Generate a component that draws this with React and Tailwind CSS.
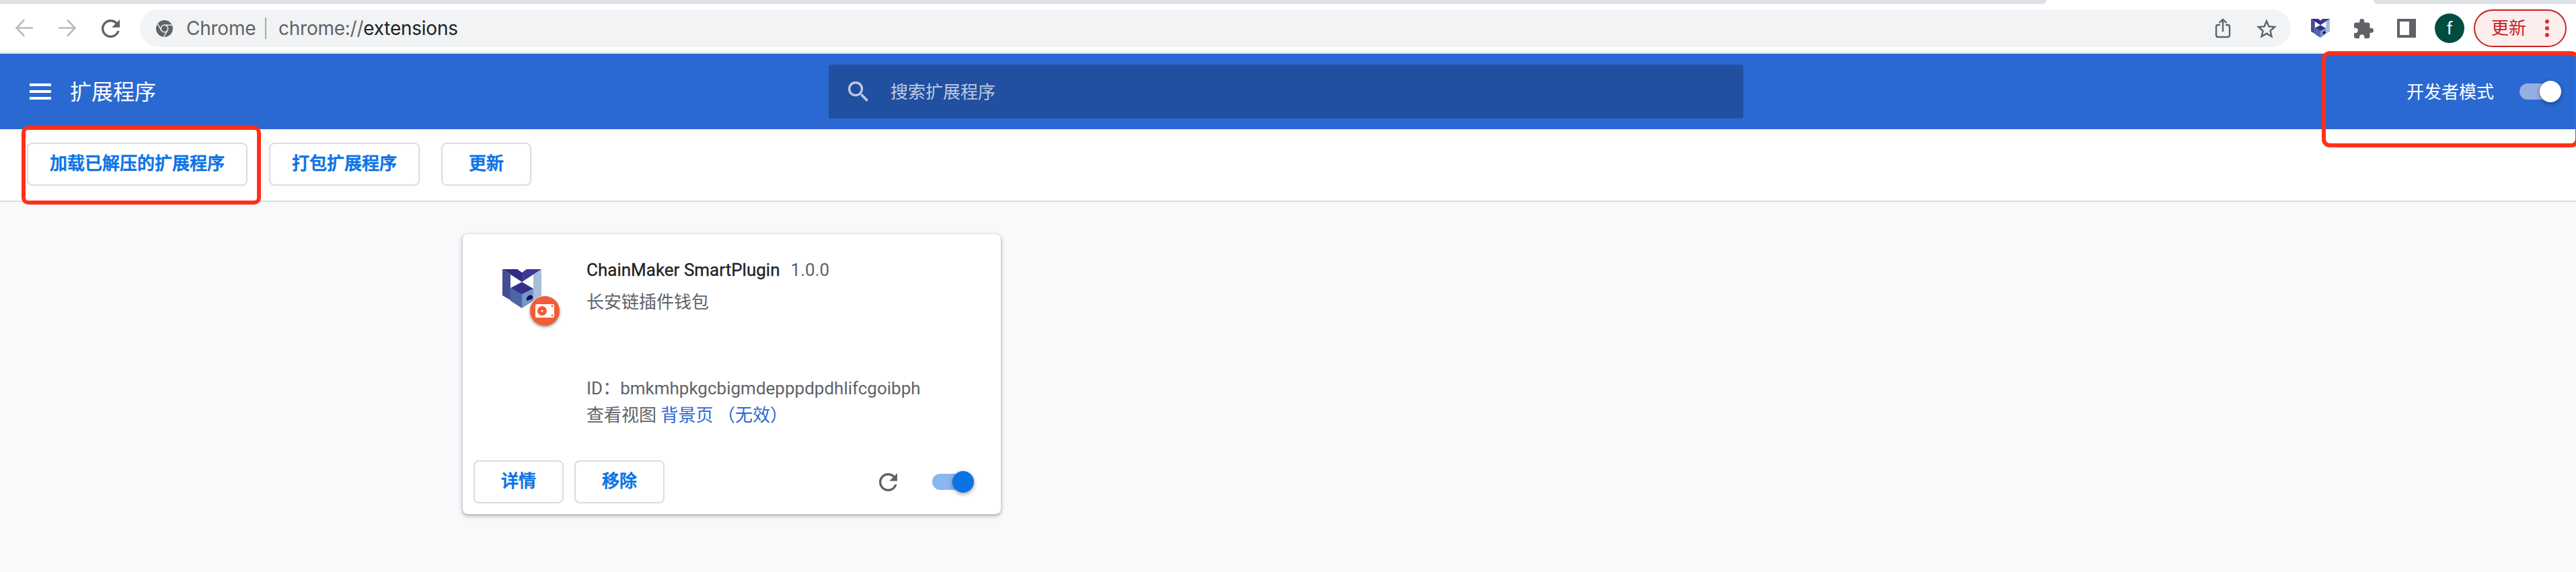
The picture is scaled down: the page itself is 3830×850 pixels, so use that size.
const CJK = "font-['Roboto','Noto_Sans_CJK_SC',sans-serif]";

function MakerLogo({ className }) {
  return (
    <svg className={className} viewBox="0 0 58 58">
      <path d="M0 0L12 8V46L0 39Z" fill="#444c94" />
      <path d="M58 0L46 8V46L58 39Z" fill="#a5bfda" />
      <path d="M0 0H22L29 5V19Z" fill="#2e2c84" />
      <path d="M58 0H36L29 5V19Z" fill="#3c3a93" />
      <path d="M29 19L46 29L29 38L12 28Z" fill="#333089" />
      <path d="M12 28L29 37V58L12 47Z" fill="#4d66a6" />
      <path d="M46 29L29 37V58L46 47Z" fill="#7697c4" />
      <path d="M36 42L41 38L45 40V44L36 47Z" fill="#12105c" />
    </svg>
  );
}

function Reload({ className }) {
  return (
    <svg className={className} viewBox="4 4 16 16" fill="currentColor">
      <path d="M17.65 6.35A7.958 7.958 0 0 0 12 4c-4.42 0-7.99 3.58-7.99 8s3.57 8 7.99 8c3.73 0 6.84-2.55 7.73-6h-2.08A5.99 5.99 0 0 1 12 18c-3.31 0-6-2.69-6-6s2.69-6 6-6c1.66 0 3.14.69 4.22 1.78L13 11h7V4l-2.35 2.35z" />
    </svg>
  );
}

function Button({ children, className = "" }) {
  return (
    <button className={`flex h-16 items-center justify-center rounded-lg border-2 border-[#dadce0] bg-white pb-0.5 text-[26px] leading-none font-medium text-[#0b73e6] [-webkit-text-stroke:0.7px_#0b73e6] ${className}`}>
      {children}
    </button>
  );
}

function Toggle({ track, knob }) {
  return (
    <div className={`flex h-6 w-[60px] items-center justify-end rounded-full ${track}`}>
      <div className={`-mr-0.5 size-8 shrink-0 rounded-full shadow-[0_2px_6px_rgba(0,0,0,0.4)] ${knob}`} />
    </div>
  );
}

function BrowserBar() {
  return (
    <div className="h-20 border-b-2 border-[#dadce0] bg-white">
      <div className="flex h-1.5 justify-between">
        <div className="w-[3043px] rounded-br-[12px] bg-[#dee1e6]" />
        <div className="w-[301px] rounded-bl-[12px] bg-[#dee1e6]" />
      </div>
      <div className="flex h-[72px] items-center pl-[22px] font-['Inter','Noto_Sans_CJK_SC',sans-serif]">
        <svg className="h-7 w-7" viewBox="0 0 28 28" fill="none" stroke="#bababa" strokeWidth="2.6">
          <path d="M27 13.500H3M14 1.500L2.500 13.500L14 25.500" />
        </svg>
        <svg className="ml-9 h-7 w-7" viewBox="0 0 28 28" fill="none" stroke="#bababa" strokeWidth="2.6">
          <path d="M1 13.500H25M14 1.500L25.500 13.500L14 25.500" />
        </svg>
        <Reload className="ml-[37px] size-[27px] text-[#5f6368]" />
        <div className="ml-[30px] flex h-14 w-[3198px] items-center rounded-full bg-[#f1f3f4] pl-6 text-[28px] leading-none tracking-[-0.25px] text-[#5f6368]">
          <svg className="size-[25px]" viewBox="0 0 24 24">
            <circle cx="12" cy="12" r="12" fill="#5f6368" />
            <g fill="none" stroke="#f1f3f4" strokeWidth="1.4">
              <circle cx="12" cy="12" r="5" />
              <path d="M12 7H23M7.700 14.500L2.200 5.500M16.300 14.500L11 24" />
            </g>
          </svg>
          <span className="ml-5 w-[103px]">Chrome</span>
          <div className="ml-[14px] h-8 w-0.5 bg-[#a5a8ab]" />
          <span className="ml-[18px]">chrome://<span className="text-[#202124]">extensions</span></span>
          <svg className="mr-[38px] ml-auto h-[30px] w-6" viewBox="0 0 24 30" fill="none" stroke="#5f6368" strokeWidth="2.400">
            <path d="M8 10H5Q2 10 2 13V25Q2 28 5 28H19Q22 28 22 25V13Q22 10 19 10H16M12 20V2M6.500 7L12 1.800L17.500 7" />
          </svg>
          <svg className="mr-[21px] h-[29px] w-[30px]" viewBox="2 2 20 19" fill="#5f6368">
            <path d="M22 9.240l-7.190-.62L12 2 9.190 8.630 2 9.240l5.460 4.730L5.820 21 12 17.270 18.180 21l-1.630-7.030L22 9.240zM12 15.400l-3.760 2.270 1-4.280-3.320-2.880 4.380-.38L12 6.100l1.710 4.040 4.380.38-3.320 2.880 1 4.280L12 15.400z" />
          </svg>
        </div>
        <MakerLogo className="ml-[30px] size-7" />
        <svg className="ml-[36px] size-[29px]" viewBox="2 1 21 21" fill="#5f6368">
          <path d="M20.500 11H19V7c0-1.100-.9-2-2-2h-4V3.500a2.500 2.500 0 0 0-5 0V5H4c-1.100 0-1.990.9-1.990 2v3.800H3.500c1.490 0 2.700 1.210 2.700 2.700s-1.210 2.700-2.700 2.700H2V20c0 1.100.9 2 2 2h3.800v-1.500c0-1.490 1.210-2.700 2.700-2.700s2.700 1.210 2.700 2.700V22H17c1.100 0 2-.9 2-2v-4h1.500a2.500 2.500 0 0 0 0-5z" />
        </svg>
        <svg className="ml-[35px] size-7" viewBox="0 0 28 28">
          <path d="M0 0H28V28H0ZM4 4V24H18V4Z" fillRule="evenodd" fill="#5f6368" />
        </svg>
        <div className="ml-7 flex size-11 items-center justify-center rounded-full bg-[#004d40] font-['Roboto'] text-[26px] leading-none text-white">f</div>
        <div className="ml-[14px] flex h-14 w-[138px] items-center rounded-full border-2 border-[#c5221f] bg-[#fceeed] pl-[24px] text-[26px] leading-none text-[#c5221f]">
          更新
          <div className="ml-7 flex flex-col gap-1">
            <div className="size-1.5 rounded-full bg-[#d93025]" />
            <div className="size-1.5 rounded-full bg-[#d93025]" />
            <div className="size-1.5 rounded-full bg-[#d93025]" />
          </div>
        </div>
      </div>
    </div>
  );
}

function Header() {
  return (
    <div className="flex h-28 items-center bg-[#2b69d2] text-white">
      <div className="ml-11 flex w-8 flex-col gap-1.5">
        <div className="h-1 bg-white" />
        <div className="h-1 bg-white" />
        <div className="h-1 bg-white" />
      </div>
      <div className="ml-7 w-[1128px] pt-0.5 text-[32px] leading-none">扩展程序</div>
      <div className="flex h-20 w-[1360px] items-center rounded bg-[#2250a0] text-[26px] leading-none text-[#bdcae3]">
        <svg className="ml-[29px] size-[30px]" viewBox="3 3 17.500 17.500" fill="currentColor">
          <path d="M15.500 14h-.79l-.28-.27A6.471 6.471 0 0 0 16 9.500 6.500 6.500 0 1 0 9.500 16c1.610 0 3.090-.59 4.230-1.570l.27.28v.79l5 4.990L20.490 19l-4.990-5zm-6 0C7.010 14 5 11.990 5 9.500S7.010 5 9.500 5 14 7.010 14 9.500 11.990 14 9.500 14z" />
        </svg>
        <span className="ml-[33px] pt-0.5">搜索扩展程序</span>
      </div>
      <div className="mr-[38px] ml-auto pt-0.5 text-[26px] leading-none">开发者模式</div>
      <div className="mr-6">
        <Toggle track="bg-[#95afe3]" knob="bg-white" />
      </div>
    </div>
  );
}

function ExtensionCard() {
  return (
    <div className="flex h-[416px] w-[800px] flex-col rounded-lg bg-white shadow-[0_2px_4px_rgba(60,64,67,0.3),0_2px_6px_2px_rgba(60,64,67,0.15)]">
      <div className="flex h-[320px]">
        <div className="relative ml-[59px] w-[125px] pt-[52px]">
          <MakerLogo className="size-[58px]" />
          <div className="absolute top-[92px] left-[41px] flex size-11 items-center justify-center rounded-full bg-[#f25c36] shadow-[0_2px_4px_rgba(0,0,0,0.4)]">
            <svg className="h-5 w-7" viewBox="0 0 28 20">
              <rect width="28" height="20" rx="2" fill="#fff" />
              <circle cx="10" cy="10" r="7" fill="#f25c36" />
              <circle cx="10" cy="10" r="1.500" fill="#fff" />
              <circle cx="25" cy="3" r="1.400" fill="#f25c36" />
              <circle cx="25" cy="17" r="1.400" fill="#f25c36" />
            </svg>
          </div>
        </div>
        <div className="pt-[33px] text-[26px] leading-10 whitespace-pre text-[#5f6368]">
          <div className="flex h-12">
            <span className="text-[#202124] [-webkit-text-stroke:0.3px_#202124]">ChainMaker SmartPlugin</span>
            <span className="ml-4">1.0.0</span>
          </div>
          <div>长安链插件钱包</div>
          <div className="mt-[88px]">ID：bmkmhpkgcbigmdepppdpdhlifcgoibph</div>
          <div>查看视图 <span className="text-[#2b69d2]">背景页 （无效）</span></div>
        </div>
      </div>
      <div className="flex items-center pt-4 pr-[42px] pl-4">
        <Button className="w-[134px]">详情</Button>
        <Button className="ml-4 w-[134px]">移除</Button>
        <Reload className="mr-[52px] ml-auto size-[27px] text-[#5f6368]" />
        <Toggle track="bg-[#8ab7f0]" knob="bg-[#0b73e6]" />
      </div>
    </div>
  );
}

export default function App() {
  return (
    <div className={`relative h-[850px] w-[3830px] overflow-hidden bg-[#f8f9fb] ${CJK}`}>
      <BrowserBar />
      <Header />
      <div className="flex h-[108px] gap-8 border-b-2 border-[#dadce0] bg-white pt-5 pl-10">
        <Button className="w-[328px]">加载已解压的扩展程序</Button>
        <Button className="w-[224px]">打包扩展程序</Button>
        <Button className="w-[134px]">更新</Button>
      </div>
      <div className="pt-12 pl-[688px]">
        <ExtensionCard />
      </div>
      <div className="absolute top-[187px] left-8 h-[117px] w-[356px] rounded-[10px] border-6 border-[#ff301b]" />
      <div className="absolute top-[76px] left-[3452px] h-[143px] w-[383px] rounded-[12px] border-6 border-[#ff301b]" />
    </div>
  );
}
